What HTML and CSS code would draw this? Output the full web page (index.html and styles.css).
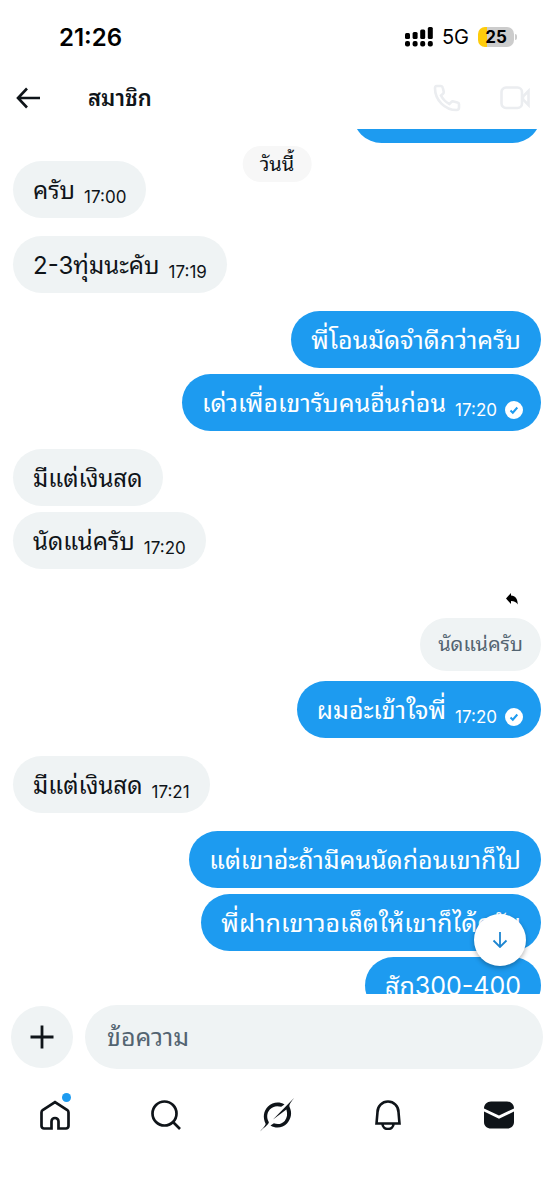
FILE: index.html
```html
<!DOCTYPE html>
<html lang="th">
<head>
<meta charset="utf-8">
<meta name="viewport" content="width=device-width, initial-scale=1">
<title>สมาชิก</title>
<link rel="stylesheet" href="styles.css">
</head>
<body>
<div class="app">
  <div class="status">
    <span class="clock">21:26</span>
    <div class="status-right">
      <svg class="signal" viewBox="0 0 28 20" aria-hidden="true">
        <g fill="#000"><rect x="0" y="6" width="5" height="6" rx="1.500"/><rect x="7.600" y="5" width="5" height="7" rx="1.500"/><rect x="15.200" y="2.500" width="5" height="9.500" rx="1.500"/><rect x="22.800" y="0" width="5" height="12" rx="1.500"/>
        <rect x="0" y="14" width="5" height="5.500" rx="2"/><rect x="7.600" y="14" width="5" height="5.500" rx="2"/><rect x="15.200" y="14" width="5" height="5.500" rx="2"/><rect x="22.800" y="14" width="5" height="5.500" rx="2"/></g>
      </svg>
      <span class="network">5G</span>
      <span class="battery">25</span>
    </div>
  </div>

  <header class="header">
    <button class="icon-button" aria-label="ย้อนกลับ">
      <svg class="icon-24" viewBox="0 0 24 24"><path d="M11 2.500 2 12l9 9.500M2 12h22" fill="none" stroke="#0f1419" stroke-width="2.600"/></svg>
    </button>
    <h1 class="title">สมาชิก</h1>
    <button class="icon-button" aria-label="โทร">
      <svg class="icon-28" viewBox="0 0 28 28"><path d="M3.500 2H8c1 0 1.500.6 1.700 1.500l1 4c.2.900 0 1.700-.7 2.300L8 11.500c2 4 4.500 6.500 8.500 8.500l1.700-1.800c.6-.7 1.400-.9 2.300-.7l4 1c.9.200 1.500.8 1.500 1.700v3.300c0 1.600-1.200 2.500-2.500 2.500C12 26 2 16 2 4.500 2 3 2.500 2 3.500 2Z" fill="none" stroke="#ebedf0" stroke-width="2.600"/></svg>
    </button>
    <button class="icon-button" aria-label="วิดีโอคอล">
      <svg class="icon-30" viewBox="0 0 30 24"><g fill="none" stroke="#ebedf0" stroke-width="2.600"><rect x="1.500" y="1.500" width="20.500" height="20.500" rx="4.500"/><path d="M23 10.500 28.500 5v14L23 13.500Z"/></g></svg>
    </button>
  </header>

  <main class="chat">
    <div class="date">วันนี้</div>
    <div class="group sent first">
      <div class="bubble cut"></div>
    </div>
    <div class="group">
      <div class="bubble">ครับ <time class="time">17:00</time></div>
    </div>
    <div class="group">
      <div class="bubble">2-3ทุ่มนะคับ <time class="time">17:19</time></div>
    </div>
    <div class="group sent">
      <div class="bubble">พี่โอนมัดจำดีกว่าครับ</div>
      <div class="bubble">เด่วเพื่อเขารับคนอื่นก่อน <time class="time">17:20</time>
        <svg class="seen" viewBox="0 0 18 18" aria-label="อ่านแล้ว"><circle cx="9" cy="9" r="9" fill="#fff"/><path d="m5.500 9.500 2.300 2.200L12.300 6.500" fill="none" stroke="#1d9bf0" stroke-width="2"/></svg></div>
    </div>
    <div class="group">
      <div class="bubble">มีแต่เงินสด</div>
      <div class="bubble">นัดแน่ครับ <time class="time">17:20</time></div>
    </div>
    <div class="group sent reply">
      <svg class="reply-icon" viewBox="0 0 12 12" aria-hidden="true"><path d="M5 0v2.500c4.500.2 6.700 3.500 6.700 9C10.500 9.200 8.500 8.200 5 8.100V11L0 5.400Z" fill="#000"/></svg>
      <div class="quote">นัดแน่ครับ</div>
      <div class="bubble">ผมอ่ะเข้าใจพี่ <time class="time">17:20</time>
        <svg class="seen" viewBox="0 0 18 18" aria-label="อ่านแล้ว"><circle cx="9" cy="9" r="9" fill="#fff"/><path d="m5.500 9.500 2.300 2.200L12.300 6.500" fill="none" stroke="#1d9bf0" stroke-width="2"/></svg></div>
    </div>
    <div class="group">
      <div class="bubble">มีแต่เงินสด <time class="time">17:21</time></div>
    </div>
    <div class="group sent">
      <div class="bubble">แต่เขาอ่ะถ้ามีคนนัดก่อนเขาก็ไป</div>
      <div class="bubble">พี่ฝากเขาวอเล็ตให้เขาก็ได้ครับ</div>
      <div class="bubble">สัก300-400</div>
    </div>
    <button class="to-bottom" aria-label="เลื่อนลงล่างสุด">
      <svg class="icon-16" viewBox="0 0 16 16"><path d="M8 0v15M1.500 8.500 8 15l6.500-6.500" fill="none" stroke="#1d85d0" stroke-width="1.800"/></svg>
    </button>
  </main>

  <form class="composer">
    <button class="add" type="button" aria-label="เพิ่ม">
      <svg class="icon-24" viewBox="0 0 24 24"><path d="M12 .5v23M.5 12h23" stroke="#0f1419" stroke-width="2.800"/></svg>
    </button>
    <input class="message" type="text" placeholder="ข้อความ" aria-label="ข้อความ">
  </form>

  <nav class="nav">
    <a class="tab" href="#" aria-label="หน้าแรก">
      <svg class="icon-30" viewBox="0 0 30 30"><path d="M11.500 28.500v-7a3.500 3.500 0 0 1 7 0v7H26a2.500 2.500 0 0 0 2.500-2.500V12.500c0-1-.4-1.900-1.200-2.500L15 2 2.700 10c-.8.600-1.200 1.500-1.200 2.500V26A2.500 2.500 0 0 0 4 28.500Z" fill="none" stroke="#0f1419" stroke-width="2.700"/></svg>
      <span class="dot"></span>
    </a>
    <a class="tab" href="#" aria-label="ค้นหา">
      <svg class="icon-30" viewBox="0 0 30 30"><g fill="none" stroke="#0f1419" stroke-width="2.700"><circle cx="13.500" cy="13.500" r="12"/><path d="m22 22 7 7"/></g></svg>
    </a>
    <a class="tab" href="#" aria-label="Grok">
      <svg class="icon-34" viewBox="0 0 34 34"><path d="M0 33.500c2-3 5-5 5.700-7.600C2.500 19.500 3.500 13 8 8.500 12.600 4 19.400 3.500 24.500 6.500l-3.300 2.300C16.500 7.300 12.500 8.500 9.800 11.500c-3.100 3.500-3.400 8.500-.9 12.700C8 27.500 3.500 29.500 0 33.500Z" fill="#0f1419"/><path d="M13 21.500 34 0c-2.300 3.400-4.800 5.500-4.600 8.500 3.200 6.500 1.600 12.500-2.400 17-4.300 4.500-11 5.500-16.500 2l3.400-2.200c4.200 1.500 8 .7 10.800-2.400 2.600-3 3-7 1.700-11.300Z" fill="#0f1419"/></svg>
    </a>
    <a class="tab" href="#" aria-label="การแจ้งเตือน">
      <svg class="icon-30" viewBox="0 0 30 30"><g fill="none" stroke="#0f1419" stroke-width="2.600"><path d="M3.500 23.500 4.500 12a10.500 10.500 0 0 1 21 0l1 11.500ZM9.500 24a5.500 5 0 0 0 11 0"/></g></svg>
    </a>
    <a class="tab" href="#" aria-label="ข้อความ">
      <svg class="icon-30" viewBox="0 0 30 30"><path d="M0 8.500C0 4.500 3 1.500 7 1.500h16c4 0 7 3 7 7L15 15.500Zm0 3L15 18.700l15-7.200V22c0 4-3 6.500-7 6.500H7c-4 0-7-2.500-7-6.500Z" fill="#0f1419"/></svg>
    </a>
  </nav>
</div>
</body>
</html>
```
FILE: styles.css
```css
* { box-sizing: border-box; }

body {
  margin: 0;
  background: #fff;
  color: #0f1419;
  font-family: Inter, "Noto Sans Thai Looped", Loma, Waree, Garuda, "Noto Sans Thai", "Noto Sans", sans-serif;
}

button { border: 0; padding: 0; background: none; }
svg { display: block; flex: none; }

.app {
  display: flex;
  flex-direction: column;
  height: 100vh;
}

.status {
  display: flex;
  align-items: center;
  justify-content: space-between;
  height: 74px;
  padding: 0 40px 0 59px;
}
.clock { font-size: 24px; font-weight: 600; color: #000; }
.status-right { display: flex; align-items: center; gap: 9px; color: #000; }
.signal { width: 28px; height: 20px; }
.network { font-size: 20px; }
.battery {
  position: relative;
  width: 36px;
  height: 20px;
  border-radius: 7px;
  background: linear-gradient(90deg, #fecc0b 9px, #ccc 9px);
  font-size: 17px;
  font-weight: 700;
  line-height: 20px;
  text-align: center;
}
.battery::after {
  content: "";
  position: absolute;
  right: -3px;
  top: 7px;
  width: 2px;
  height: 6px;
  border-radius: 0 2px 2px 0;
  background: #ccc;
}

.header {
  display: flex;
  align-items: center;
  height: 55px;
  padding: 0 24px 8px 16px;
}
.title { flex: 1; margin: 0 0 0 48px; font-size: 22px; font-weight: 600; line-height: 32px; }
.header .icon-button + .icon-button { margin-left: 39px; }
.icon-16 { width: 16px; height: 16px; }
.icon-24 { width: 24px; height: 24px; }
.icon-28 { width: 28px; height: 28px; }
.icon-30 { width: 30px; height: 30px; }
.icon-34 { width: 34px; height: 34px; }

.chat {
  position: relative;
  flex: 1;
  min-height: 0;
  overflow: hidden;
  padding: 0 13px;
}
.group {
  display: flex;
  flex-direction: column;
  align-items: flex-start;
  gap: 6px;
  margin-bottom: 18px;
}
.sent { align-items: flex-end; }
.first { margin-top: -43px; }
.bubble {
  display: flex;
  align-items: center;
  height: 57px;
  padding: 2px 20px 0;
  border-radius: 29px;
  background: #eff3f4;
  font-size: 24px;
  line-height: 55px;
  white-space: nowrap;
}
.sent .bubble { background: #1d9bf0; color: #fff; font-size: 25px; }
.cut { width: 188px; }
.time { margin-left: 9px; padding-top: 12px; font-size: 17px; line-height: 24px; }
.sent .time { font-size: 17px; }
.seen { width: 18px; height: 18px; margin: 12px -2px 0 8px; }
.reply { gap: 10px; }
.reply-icon { width: 12px; height: 12px; margin: 6px 23px 3px 0; }
.quote {
  padding: 0 18px;
  border-radius: 27px;
  background: #eff3f4;
  color: #536471;
  font-size: 20px;
  line-height: 53px;
}
.date {
  position: absolute;
  top: 17px;
  left: 50%;
  transform: translateX(-50%);
  padding: 0 17px;
  border-radius: 18px;
  background: #f7f7f7;
  font-size: 20px;
  line-height: 36px;
}
.to-bottom {
  position: absolute;
  right: 28px;
  bottom: 28px;
  display: grid;
  place-items: center;
  width: 52px;
  height: 52px;
  border-radius: 50%;
  background: #fff;
  box-shadow: 0 2px 5px rgba(0, 0, 0, .3);
}

.composer {
  display: flex;
  align-items: center;
  gap: 12px;
  padding: 11px 11px 10px;
}
.add {
  display: grid;
  place-items: center;
  flex: none;
  width: 62px;
  height: 62px;
  border-radius: 50%;
  background: #eff3f4;
}
.message {
  flex: 1;
  min-width: 0;
  height: 64px;
  padding: 0 22px;
  border: 0;
  border-radius: 32px;
  background: #eff3f4;
  color: #0f1419;
  font: inherit;
  font-size: 25px;
}
.message::placeholder { color: #536471; opacity: 1; }

.nav {
  display: grid;
  grid-template-columns: repeat(5, 1fr);
  height: 120px;
  padding-top: 13px;
}
.tab {
  position: relative;
  display: grid;
  place-items: center;
  height: 46px;
}
.dot {
  position: absolute;
  top: 1px;
  left: calc(50% + 7px);
  width: 9px;
  height: 9px;
  border-radius: 50%;
  background: #1d9bf0;
}
```
